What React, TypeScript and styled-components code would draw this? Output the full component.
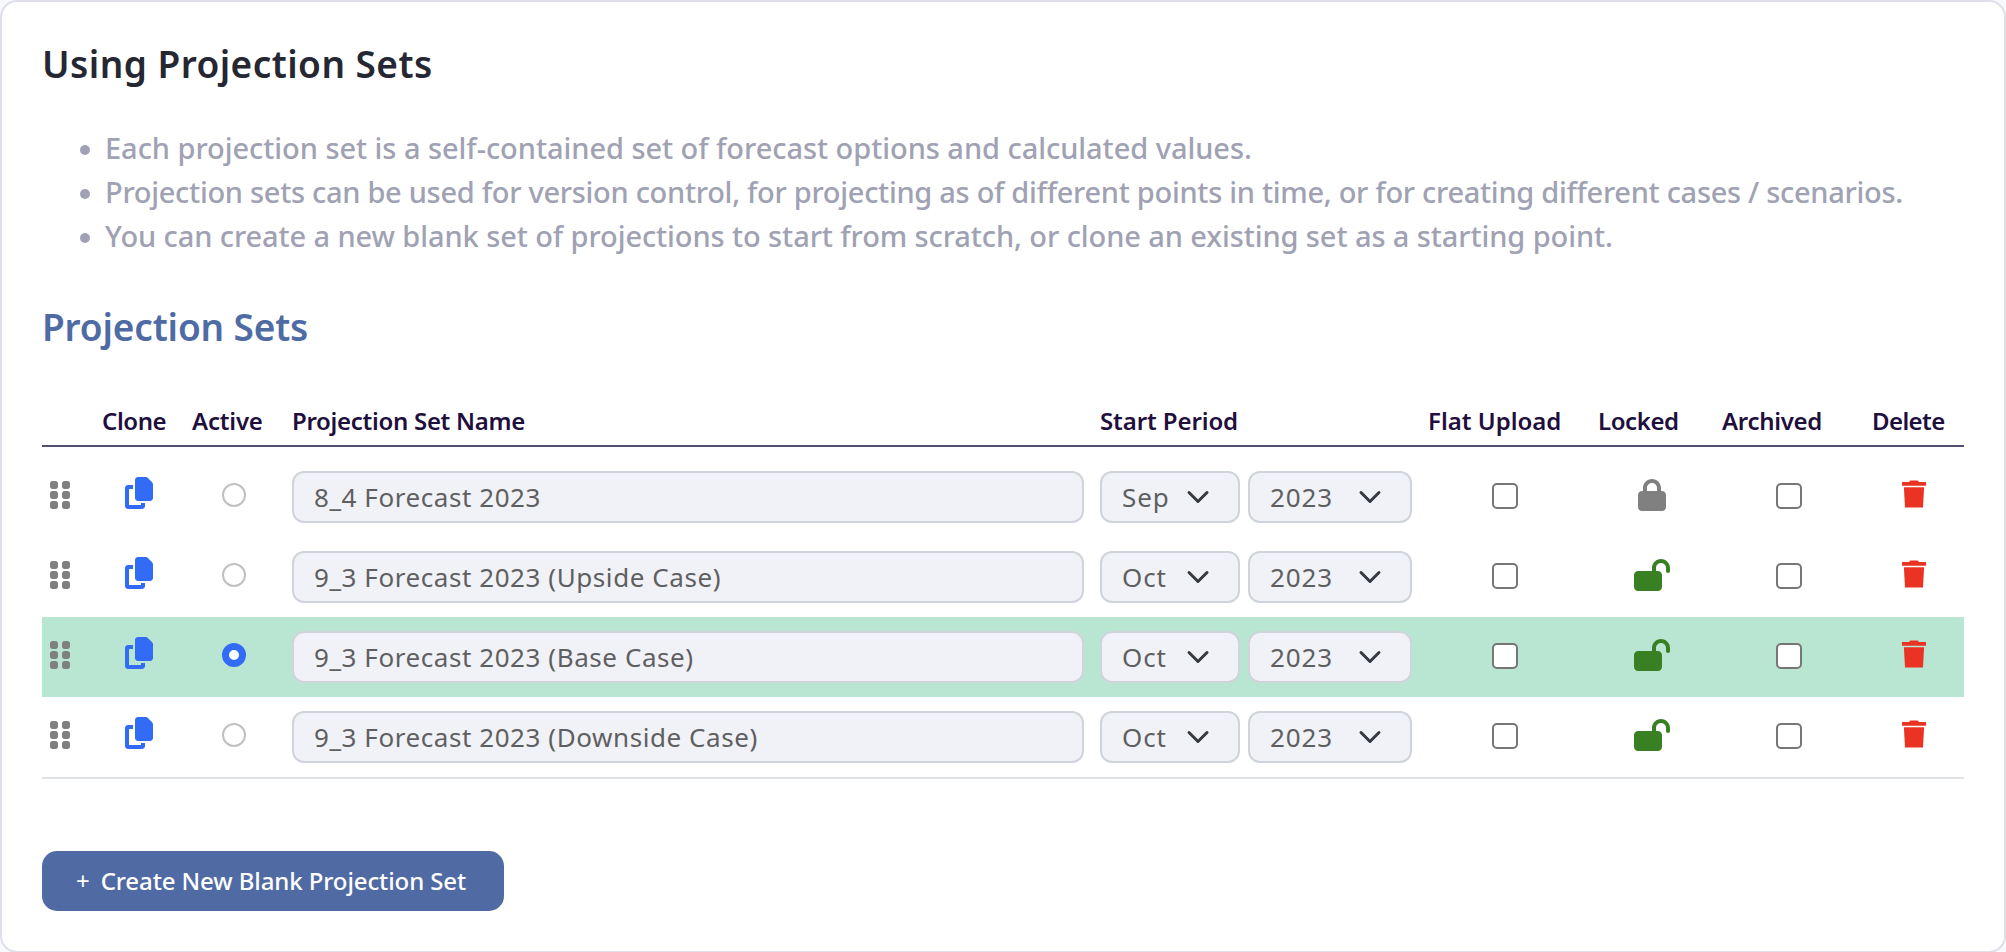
import styled, { createGlobalStyle, css } from "styled-components";
import { FaCopy, FaGripVertical, FaLock, FaLockOpen } from "react-icons/fa6";

const GlobalStyle = createGlobalStyle`
  * {
    box-sizing: border-box;
  }

  body {
    margin: 0;
    overflow: hidden;
    background: #f8f9fd;
    font-family: "Noto Sans", "Open Sans", sans-serif;
  }
`;

type TrackingProps = {
  $tracking?: number;
};

const tracking = css<TrackingProps>`
  letter-spacing: ${({ $tracking = 0 }) => $tracking}px;
`;

const Card = styled.main`
  display: flex;
  flex-direction: column;
  align-items: stretch;
  height: 953px;
  padding: 40px;
  background: #ffffff;
  border: 2px solid #dfdfec;
  border-radius: 17px;
`;

const Title = styled.h1<TrackingProps>`
  margin: 0 0 40px;
  color: #252733;
  font-size: 37px;
  font-weight: 600;
  line-height: 44px;
  white-space: nowrap;
  ${tracking}
`;

const SubTitle = styled(Title).attrs({ as: "h2" })`
  margin: 47px 0 54px;
  color: #4f6ba4;
`;

const NoteList = styled.ul`
  list-style: none;
  margin: 0;
  padding: 0 0 0 38px;
`;

const Note = styled.li<TrackingProps>`
  display: flex;
  align-items: center;
  gap: 15px;
  color: #a0a2b3;
  font-size: 29px;
  font-weight: 500;
  line-height: 44px;
  white-space: nowrap;
  ${tracking}

  &::before {
    content: "";
    width: 10px;
    height: 10px;
    margin-top: 4px;
    border-radius: 50%;
    background: currentColor;
  }
`;

const Table = styled.section`
  border-bottom: 2px solid #dee2e6;
`;

const columns = css`
  display: grid;
  grid-template-columns: 60px 90px 100px 808px 328px 170px 124px 150px 92px;
`;

const HeaderRow = styled.header`
  ${columns}
  padding-bottom: 6px;
  margin-bottom: 10px;
  border-bottom: 2px solid #51506e;
`;

const HeaderCell = styled.span<TrackingProps>`
  color: #1f0f3d;
  font-size: 24px;
  font-weight: 600;
  line-height: 36px;
  white-space: nowrap;
  ${tracking}
`;

const Row = styled.div<{ $active: boolean }>`
  ${columns}
  align-items: center;
  height: 80px;
  background: ${({ $active }) => ($active ? "#b9e6d3" : "transparent")};
`;

type CellProps = {
  $indent?: number;
  $lift?: number;
};

const Cell = styled.div<CellProps>`
  display: flex;
  align-items: center;
  gap: 8px;
  padding-left: ${({ $indent = 0 }) => $indent}px;
  padding-bottom: ${({ $lift = 0 }) => $lift}px;
`;

type IconProps = {
  $width: number;
  $color: string;
};

const Icon = styled.span<IconProps>`
  display: flex;
  color: ${({ $color }) => $color};

  svg {
    display: block;
    width: ${({ $width }) => $width}px;
    height: 32px;
  }
`;

const LockSlot = styled.div`
  display: flex;
  justify-content: center;
  width: 36px;
`;

const Radio = styled.span<{ $checked: boolean }>`
  width: 24px;
  height: 24px;
  border-radius: 50%;
  background: #ffffff;
  border: ${({ $checked }) => ($checked ? "7px solid #316bf6" : "2px solid #c0c0c0")};
`;

const Checkbox = styled.span`
  width: 26px;
  height: 26px;
  border: 2px solid #767676;
  border-radius: 5px;
  background: #ffffff;
`;

const Field = styled.div<TrackingProps & { $width: number }>`
  display: flex;
  align-items: center;
  justify-content: space-between;
  width: ${({ $width }) => $width}px;
  height: 52px;
  padding: 0 28px 0 20px;
  border: 2px solid #ced4da;
  border-radius: 12px;
  background: #f1f2f7;
  color: #5f5f61;
  font-size: 26px;
  line-height: 40px;
  white-space: nowrap;
  ${tracking}
`;

const CreateButton = styled.button<TrackingProps>`
  display: flex;
  align-items: center;
  gap: 11px;
  width: 462px;
  height: 60px;
  margin-top: 72px;
  padding: 0 34px;
  border: none;
  border-radius: 15px;
  background: #506ba4;
  color: #ffffff;
  font-family: inherit;
  font-size: 24px;
  font-weight: 500;
  line-height: 36px;
  white-space: nowrap;
  ${tracking}
`;

const PlusSign = styled.span`
  font-weight: 400;
`;

function Chevron() {
  return (
    <svg width="24" height="24" viewBox="0 0 16 16" fill="none">
      <path
        d="m2 5 6 6 6-6"
        stroke="#343a40"
        strokeWidth="2"
        strokeLinecap="round"
        strokeLinejoin="round"
      />
    </svg>
  );
}

function TrashIcon() {
  return (
    <svg width="24" height="28" viewBox="0 0 24 28" fill="#ea3323">
      <path d="M0 2h7l1.4-1.5h7.2L17 2h7v3.7H0z" />
      <path d="M1.9 7.2h20.2l-1.1 20.3H3z" />
    </svg>
  );
}

type SelectProps = {
  value: string;
  width: number;
};
function Select(props: SelectProps) {
  return (
    <Field $width={props.width} $tracking={0.9}>
      {props.value}
      <Chevron />
    </Field>
  );
}

type LockProps = {
  locked: boolean;
};
function Lock(props: LockProps) {
  return (
    <LockSlot>
      {props.locked ? (
        <Icon $width={28} $color="#808080">
          <FaLock />
        </Icon>
      ) : (
        <Icon $width={36} $color="#398023">
          <FaLockOpen />
        </Icon>
      )}
    </LockSlot>
  );
}

type ProjectionSet = {
  name: string;
  month: string;
  year: string;
  active: boolean;
  locked: boolean;
};

const projectionSets: ProjectionSet[] = [
  { name: "8_4 Forecast 2023", month: "Sep", year: "2023", active: false, locked: true },
  { name: "9_3 Forecast 2023 (Upside Case)", month: "Oct", year: "2023", active: false, locked: false },
  { name: "9_3 Forecast 2023 (Base Case)", month: "Oct", year: "2023", active: true, locked: false },
  { name: "9_3 Forecast 2023 (Downside Case)", month: "Oct", year: "2023", active: false, locked: false },
];

function ProjectionRow(props: ProjectionSet) {
  return (
    <Row $active={props.active}>
      <Cell $indent={8} $lift={4}>
        <Icon $width={20} $color="#808080">
          <FaGripVertical />
        </Icon>
      </Cell>
      <Cell $indent={23} $lift={8}>
        <Icon $width={28} $color="#316bf6">
          <FaCopy />
        </Icon>
      </Cell>
      <Cell $indent={30} $lift={4}>
        <Radio $checked={props.active} />
      </Cell>
      <Cell>
        <Field $width={792} $tracking={0.57}>
          {props.name}
        </Field>
      </Cell>
      <Cell>
        <Select value={props.month} width={140} />
        <Select value={props.year} width={164} />
      </Cell>
      <Cell $indent={64} $lift={2}>
        <Checkbox />
      </Cell>
      <Cell $indent={36} $lift={4}>
        <Lock locked={props.locked} />
      </Cell>
      <Cell $indent={54} $lift={2}>
        <Checkbox />
      </Cell>
      <Cell $indent={30} $lift={6}>
        <TrashIcon />
      </Cell>
    </Row>
  );
}

export default function App() {
  return (
    <>
      <GlobalStyle />
      <Card>
        <Title $tracking={0.45}>Using Projection Sets</Title>
        <NoteList>
          <Note $tracking={-0.05}>
            Each projection set is a self-contained set of forecast options and calculated values.
          </Note>
          <Note $tracking={-0.29}>
            Projection sets can be used for version control, for projecting as of different points in time, or for
            creating different cases / scenarios.
          </Note>
          <Note $tracking={-0.09}>
            You can create a new blank set of projections to start from scratch, or clone an existing set as a starting
            point.
          </Note>
        </NoteList>
        <SubTitle $tracking={-0.15}>Projection Sets</SubTitle>
        <Table>
          <HeaderRow>
            <span />
            <HeaderCell $tracking={-0.4}>Clone</HeaderCell>
            <HeaderCell $tracking={-0.2}>Active</HeaderCell>
            <HeaderCell $tracking={-0.3}>Projection Set Name</HeaderCell>
            <HeaderCell $tracking={-0.1}>Start Period</HeaderCell>
            <HeaderCell $tracking={0}>Flat Upload</HeaderCell>
            <HeaderCell $tracking={-0.4}>Locked</HeaderCell>
            <HeaderCell $tracking={-0.3}>Archived</HeaderCell>
            <HeaderCell $tracking={-0.6}>Delete</HeaderCell>
          </HeaderRow>
          {projectionSets.map((set) => (
            <ProjectionRow key={set.name} {...set} />
          ))}
        </Table>
        <CreateButton $tracking={-0.1}>
          <PlusSign>+</PlusSign>
          <span>Create New Blank Projection Set</span>
        </CreateButton>
      </Card>
    </>
  );
}
